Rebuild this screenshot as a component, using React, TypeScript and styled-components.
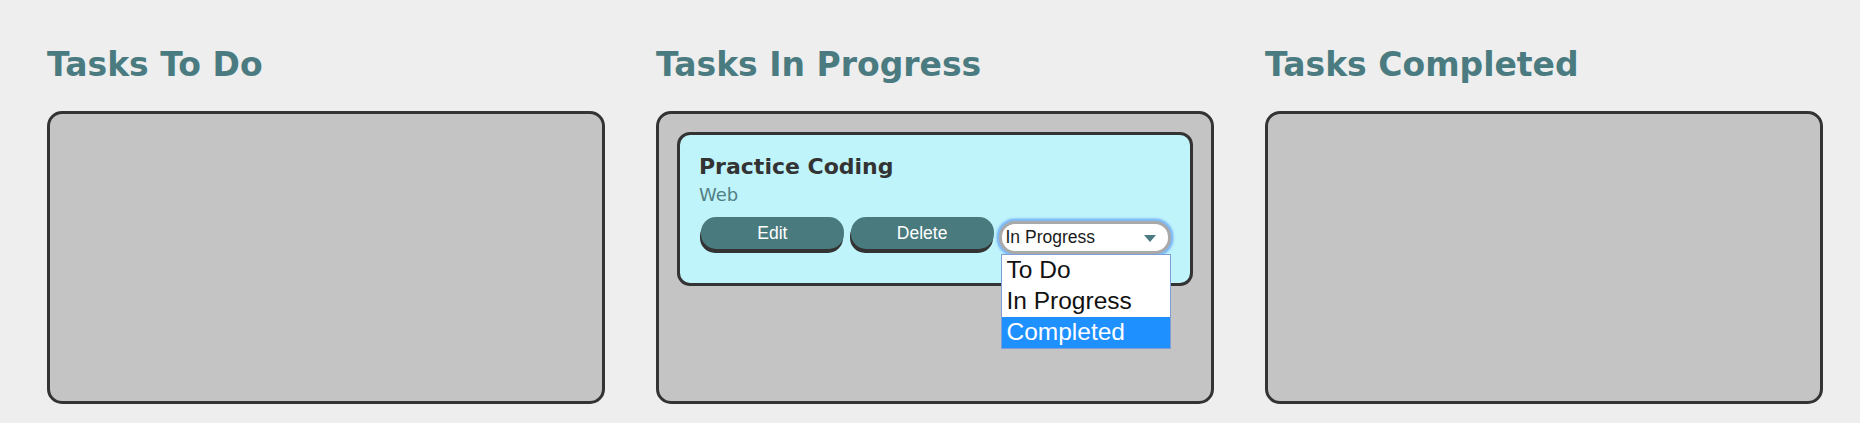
import React from "react";
import styled, { createGlobalStyle } from "styled-components";

const GlobalStyle = createGlobalStyle`
  html, body {
    margin: 0;
    padding: 0;
    background: #eeeeee;
  }
  body {
    font-family: "DejaVu Sans", Verdana, sans-serif;
  }
`;

const Board = styled.main`
  display: flex;
  align-items: flex-start;
  gap: 51.5px;
  padding: 45px 0 0 47px;
  box-sizing: border-box;
  width: 1860px;
  height: 423px;
`;

const Column = styled.section`
  display: flex;
  flex-direction: column;
  width: 557.5px;
`;

const ColumnTitle = styled.h2`
  margin: 0 0 26px;
  font-family: "DejaVu Sans", Verdana, sans-serif;
  font-weight: bold;
  font-size: 33px;
  line-height: 40px;
  color: #4a7b80;
  white-space: nowrap;
`;

const Lane = styled.div`
  box-sizing: border-box;
  height: 293px;
  border: 3px solid #333333;
  border-radius: 15px;
  background: #c4c4c4;
  padding: 18px;
`;

const Card = styled.article`
  position: relative;
  border: 3px solid #333333;
  border-radius: 13px;
  background: #bff4fb;
  padding: 19px 19px 29px;
`;

const CardTitle = styled.h3`
  margin: 0;
  font-family: "DejaVu Sans", Verdana, sans-serif;
  font-weight: bold;
  font-size: 22px;
  line-height: 26px;
  color: #333333;
`;

const CardCategory = styled.p`
  margin: 4px 0 0;
  font-family: "DejaVu Sans", Verdana, sans-serif;
  font-size: 18px;
  line-height: 22px;
  color: #527f82;
`;

const Actions = styled.div`
  display: flex;
  align-items: flex-start;
  gap: 7px;
  margin-top: 11px;
  padding-left: 2px;
`;

const ActionButton = styled.button`
  width: 144px;
  height: 32px;
  border: none;
  border-radius: 15px;
  background: #497a7d;
  box-shadow: -1px 4px 0 #333333;
  color: #ffffff;
  font-family: "Liberation Sans", Arial, sans-serif;
  font-size: 17.5px;
  line-height: 32px;
  padding: 0;
  text-align: center;
`;

const SelectWrap = styled.div`
  position: relative;
  margin-left: -2px;
  margin-top: 4px;
`;

const SelectBox = styled.div`
  box-sizing: border-box;
  width: 172px;
  height: 33px;
  display: flex;
  align-items: center;
  justify-content: space-between;
  padding: 0 12px 0 4px;
  border: 3px solid #a9a9a9;
  border-radius: 16px;
  background: #ffffff;
  box-shadow: 0 0 0 2px #80bbf6, 0 0 2px 3px rgba(128, 187, 246, 0.7);
  font-family: "Liberation Sans", Arial, sans-serif;
  font-size: 17.5px;
  color: #1a1a1a;
`;

const Caret = styled.span`
  width: 0;
  height: 0;
  border-left: 6px solid transparent;
  border-right: 6px solid transparent;
  border-top: 7px solid #4a7b80;
  margin-top: 2px;
`;

const OptionList = styled.ul`
  position: absolute;
  top: 33px;
  left: 2px;
  z-index: 5;
  box-sizing: border-box;
  width: 170px;
  margin: 0;
  padding: 0;
  list-style: none;
  background: #ffffff;
  border: 1px solid #7f9ed6;
`;

const OptionItem = styled.li<{ $active?: boolean }>`
  height: 31px;
  line-height: 30px;
  padding-left: 5px;
  font-family: "Liberation Sans", Arial, sans-serif;
  font-size: 24.5px;
  color: ${(p) => (p.$active ? "#ffffff" : "#111111")};
  background: ${(p) => (p.$active ? "#1e90ff" : "transparent")};
`;

const statuses = ["To Do", "In Progress", "Completed"];

export default function App() {
  return (
    <>
      <GlobalStyle />
      <Board>
        <Column>
          <ColumnTitle>Tasks To Do</ColumnTitle>
          <Lane />
        </Column>
        <Column>
          <ColumnTitle>Tasks In Progress</ColumnTitle>
          <Lane>
            <Card>
              <CardTitle>Practice Coding</CardTitle>
              <CardCategory>Web</CardCategory>
              <Actions>
                <ActionButton>Edit</ActionButton>
                <ActionButton>Delete</ActionButton>
                <SelectWrap>
                  <SelectBox>
                    <span>In Progress</span>
                    <Caret />
                  </SelectBox>
                  <OptionList>
                    {statuses.map((s) => (
                      <OptionItem key={s} $active={s === "Completed"}>
                        {s}
                      </OptionItem>
                    ))}
                  </OptionList>
                </SelectWrap>
              </Actions>
            </Card>
          </Lane>
        </Column>
        <Column>
          <ColumnTitle>Tasks Completed</ColumnTitle>
          <Lane />
        </Column>
      </Board>
    </>
  );
}
